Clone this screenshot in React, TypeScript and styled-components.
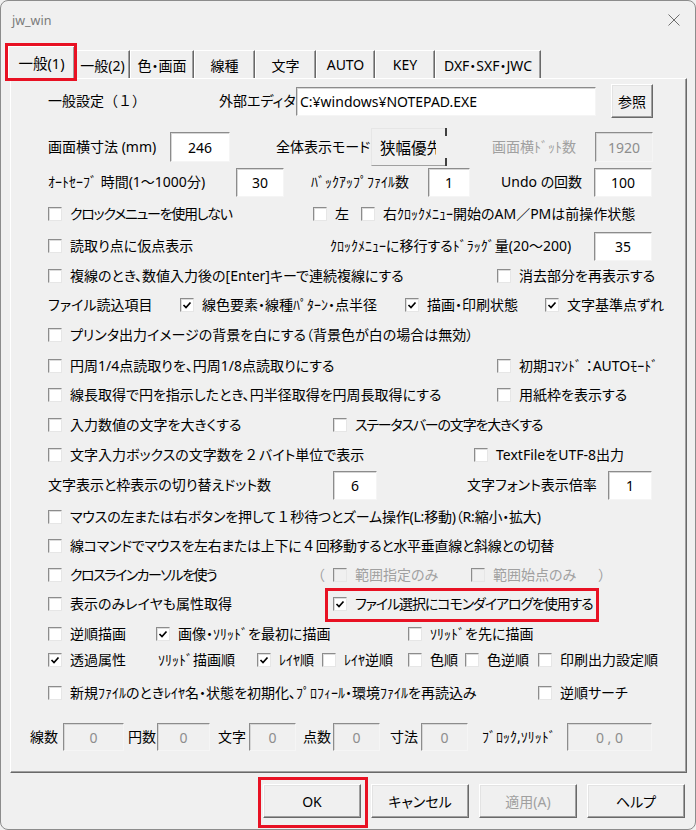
import React from 'react';
import styled, { createGlobalStyle, css } from 'styled-components';

const GlobalStyle = createGlobalStyle`
  html, body { margin: 0; padding: 0; background: #f0f0f0; }
  body {
    font-family: "Noto Sans", "Noto Sans CJK JP", sans-serif;
    font-size: 14px;
    color: #000;
  }
  * { box-sizing: border-box; }
`;

const ROW_H = 24;
const PANEL_X = 11;

const Window = styled.div`
  position: relative;
  width: 696px;
  height: 830px;
  border: 1px solid #8c8c8c;
  border-radius: 8px;
  background: #f0f0f0;
  overflow: hidden;
  display: flex;
  flex-direction: column;
`;

const TitleBar = styled.div`
  height: 40px;
  flex: none;
  display: flex;
  align-items: flex-start;
  padding-left: 11px;
`;

const Title = styled.span`
  font-family: "Noto Sans", sans-serif;
  font-size: 12.5px;
  color: #7a7a7a;
  margin-top: 11px;
  line-height: 18px;
`;

const CloseIcon = styled.svg`
  margin-left: auto;
  margin-right: 15px;
  margin-top: 13px;
`;

const TabStrip = styled.div`
  height: 37px;
  flex: none;
  display: flex;
  align-items: flex-end;
  padding-left: 7px;
  position: relative;
  z-index: 1;
`;

const Tab = styled.div<{ $w: number; $active?: boolean }>`
  width: ${(p) => p.$w}px;
  height: 28px;
  flex: none;
  display: flex;
  align-items: center;
  justify-content: center;
  white-space: nowrap;
  font-size: 14px;
  font-feature-settings: "palt";
  background: #f0f0f0;
  border-top: 1px solid #ffffff;
  border-left: 1px solid #ffffff;
  border-right: 1px solid #696969;
  box-shadow: inset -1px 0 0 #a0a0a0;
  ${(p) =>
    p.$active &&
    css`
      height: 33px;
      margin-bottom: -1px;
      padding-bottom: 2px;
      font-size: 14.5px;
    `}
`;

const Panel = styled.div`
  flex: none;
  margin-left: 9px;
  width: 677px;
  height: 695px;
  border-top: 1px solid #ffffff;
  border-left: 1px solid #ffffff;
  border-right: 1px solid #696969;
  border-bottom: 1px solid #696969;
  box-shadow: inset -1px -1px 0 #a0a0a0;
  display: flex;
  flex-direction: column;
`;

const Row = styled.div<{ $gap: number; $indent: number }>`
  height: ${ROW_H}px;
  flex: none;
  margin-top: ${(p) => p.$gap}px;
  padding-left: ${(p) => p.$indent}px;
  display: flex;
  align-items: center;
`;

const Cell = styled.div<{ $w?: number }>`
  flex: none;
  width: ${(p) => (p.$w ? `${p.$w}px` : 'auto')};
  display: flex;
  align-items: center;
  height: ${ROW_H}px;
  overflow: visible;
`;

const Label = styled.span<{ $gray?: boolean; $wide?: boolean; $ls?: number }>`
  white-space: pre;
  line-height: 20px;
  letter-spacing: ${(p) => p.$ls ?? 0}px;
  font-feature-settings: ${(p) => (p.$wide ? 'normal' : '"palt"')};
  color: ${(p) => (p.$gray ? '#a0a0a0' : '#000')};
`;

const CheckWrap = styled.div`
  display: flex;
  align-items: center;
  gap: 8px;
`;

const Box = styled.span<{ $dis?: boolean }>`
  width: 14px;
  height: 14px;
  flex: none;
  display: flex;
  align-items: center;
  justify-content: center;
  background: ${(p) => (p.$dis ? '#f0f0f0' : '#ffffff')};
  border: 1px solid;
  border-color: #8c8c8c #e6e6e6 #e6e6e6 #8c8c8c;
  box-shadow: inset 1px 1px 0 #dcdcdc;
`;

const Field = styled.div<{ $w: number; $h: number; $dis?: boolean; $left?: boolean }>`
  width: ${(p) => p.$w}px;
  height: ${(p) => p.$h}px;
  flex: none;
  display: flex;
  align-items: center;
  justify-content: ${(p) => (p.$left ? 'flex-start' : 'center')};
  padding-left: ${(p) => (p.$left ? 3 : 0)}px;
  background: ${(p) => (p.$dis ? '#f0f0f0' : '#ffffff')};
  color: ${(p) => (p.$dis ? '#8d8d8d' : '#000')};
  border: 1px solid;
  border-color: #8c8c8c #f5f5f5 #f5f5f5 #8c8c8c;
  box-shadow: inset 1px 1px 0 #d6d6d6;
  white-space: pre;
  font-size: 14px;
`;

const PushButton = styled.button<{ $w: number; $h: number; $dis?: boolean; $clip?: boolean }>`
  width: ${(p) => p.$w}px;
  height: ${(p) => p.$h}px;
  flex: none;
  padding: 0;
  margin: 0;
  font-family: inherit;
  font-size: 14px;
  font-feature-settings: "palt";
  color: ${(p) => (p.$dis ? '#a0a0a0' : '#000')};
  background: #f0f0f0;
  border: 1px solid;
  border-color: #ffffff #696969 #696969 #ffffff;
  box-shadow: inset -1px -1px 0 #a0a0a0, inset 1px 1px 0 #e3e3e3;
  display: flex;
  align-items: center;
  justify-content: ${(p) => (p.$clip ? 'flex-start' : 'center')};
  padding-left: ${(p) => (p.$clip ? 8 : 0)}px;
  position: relative;
  ${(p) =>
    p.$clip &&
    css`
      font-size: 15.5px;
      border-color: #e6e6e6 transparent #a0a0a0 #e6e6e6;
      box-shadow: none;
      &::before,
      &::after {
        content: '';
        position: absolute;
        right: -1px;
        width: 2px;
        height: 8px;
        background: #404040;
      }
      &::before { top: -1px; }
      &::after { bottom: -1px; }
    `}
`;

const ClipText = styled.span`
  display: block;
  width: 56px;
  overflow: hidden;
  white-space: nowrap;
  text-align: left;
`;

const ButtonBar = styled.div`
  flex: none;
  margin-top: 11px;
  display: flex;
  justify-content: flex-end;
  gap: 10px;
  padding-right: 10px;
`;

const Highlight = styled.div<{ $x: number; $y: number; $w: number; $h: number }>`
  position: absolute;
  left: ${(p) => p.$x}px;
  top: ${(p) => p.$y}px;
  width: ${(p) => p.$w}px;
  height: ${(p) => p.$h}px;
  border: 3px solid #e81123;
  pointer-events: none;
  z-index: 5;
`;

type Item =
  | { k: 'text'; x: number; s: string; gray?: boolean; wide?: boolean; ls?: number }
  | { k: 'check'; x: number; s: string; on?: boolean; dis?: boolean; ls?: number }
  | { k: 'field'; x: number; w: number; h: number; v: string; dis?: boolean; left?: boolean }
  | { k: 'btn'; x: number; w: number; h: number; s: string; clip?: boolean };

type RowDef = { y: number; items: Item[] };

const T = '\u2009';

const rows: RowDef[] = [
  {
    y: 101,
    items: [
      { k: 'text', x: 48, s: '一般設定（１）', wide: true },
      { k: 'text', x: 219, s: '外部エディタ' },
      { k: 'field', x: 296, w: 300, h: 29, v: 'C:¥windows¥NOTEPAD.EXE', left: true },
      { k: 'btn', x: 611, w: 42, h: 34, s: '参照' },
    ],
  },
  {
    y: 147,
    items: [
      { k: 'text', x: 48, s: '画面横寸法 (mm)' },
      { k: 'field', x: 170, w: 60, h: 30, v: '246' },
      { k: 'text', x: 276, s: '全体表示モード' },
      { k: 'btn', x: 371, w: 76, h: 38, s: '狭幅優先', clip: true },
      { k: 'text', x: 492, s: '画面横ﾄﾞｯﾄ数', gray: true },
      { k: 'field', x: 595, w: 58, h: 30, v: '1920', dis: true },
    ],
  },
  {
    y: 182,
    items: [
      { k: 'text', x: 48, s: 'ｵｰﾄｾｰﾌﾞ 時間(1～1000分)' },
      { k: 'field', x: 236, w: 48, h: 29, v: '30' },
      { k: 'text', x: 311, s: 'ﾊﾞｯｸｱｯﾌﾟﾌｧｲﾙ数' },
      { k: 'field', x: 428, w: 42, h: 29, v: '1' },
      { k: 'text', x: 501, s: 'Undo の回数' },
      { k: 'field', x: 594, w: 58, h: 29, v: '100' },
    ],
  },
  {
    y: 214,
    items: [
      { k: 'check', x: 48, s: 'クロックメニューを使用しない', ls: -1.3 },
      { k: 'check', x: 313, s: '左' },
      { k: 'check', x: 361, s: '右ｸﾛｯｸﾒﾆｭｰ開始のAM／PMは前操作状態' },
    ],
  },
  {
    y: 246,
    items: [
      { k: 'check', x: 48, s: '読取り点に仮点表示' },
      { k: 'text', x: 330, s: 'ｸﾛｯｸﾒﾆｭｰに移行するﾄﾞﾗｯｸﾞ量(20～200)' },
      { k: 'field', x: 594, w: 58, h: 29, v: '35' },
    ],
  },
  {
    y: 276,
    items: [
      { k: 'check', x: 48, s: '複線のとき、数値入力後の[Enter]キーで連続複線にする' },
      { k: 'check', x: 497, s: '消去部分を再表示する' },
    ],
  },
  {
    y: 305,
    items: [
      { k: 'text', x: 48, s: 'ファイル読込項目' },
      { k: 'check', x: 180, s: '線色要素・線種ﾊﾟﾀｰﾝ・点半径', on: true },
      { k: 'check', x: 405, s: '描画・印刷状態', on: true },
      { k: 'check', x: 545, s: '文字基準点ずれ', on: true },
    ],
  },
  {
    y: 335,
    items: [{ k: 'check', x: 48, s: 'プリンタ出力イメージの背景を白にする（背景色が白の場合は無効）' }],
  },
  {
    y: 366,
    items: [
      { k: 'check', x: 48, s: '円周1/4点読取りを、円周1/8点読取りにする' },
      { k: 'check', x: 497, s: '初期ｺﾏﾝﾄﾞ ：AUTOﾓｰﾄﾞ' },
    ],
  },
  {
    y: 395,
    items: [
      { k: 'check', x: 48, s: '線長取得で円を指示したとき、円半径取得を円周長取得にする' },
      { k: 'check', x: 497, s: '用紙枠を表示する' },
    ],
  },
  {
    y: 425,
    items: [
      { k: 'check', x: 48, s: '入力数値の文字を大きくする' },
      { k: 'check', x: 333, s: 'ステータスバーの文字を大きくする', ls: -1.2 },
    ],
  },
  {
    y: 455,
    items: [
      { k: 'check', x: 48, s: `文字入力ボックスの文字数を${T}２${T}バイト単位で表示` },
      { k: 'check', x: 474, s: 'TextFileをUTF-8出力' },
    ],
  },
  {
    y: 485,
    items: [
      { k: 'text', x: 48, s: '文字表示と枠表示の切り替えドット数' },
      { k: 'field', x: 333, w: 44, h: 29, v: '6' },
      { k: 'text', x: 467, s: '文字フォント表示倍率' },
      { k: 'field', x: 608, w: 44, h: 29, v: '1' },
    ],
  },
  {
    y: 517,
    items: [{ k: 'check', x: 48, s: `マウスの左または右ボタンを押して${T}１${T}秒待つとズーム操作(L:移動)（R:縮小・拡大)`, ls: -0.2 }],
  },
  {
    y: 546,
    items: [{ k: 'check', x: 48, s: `線コマンドでマウスを左右または上下に${T}４${T}回移動すると水平垂直線と斜線との切替`, ls: -0.3 }],
  },
  {
    y: 575,
    items: [
      { k: 'check', x: 48, s: 'クロスラインカーソルを使う', ls: -1.5 },
      { k: 'text', x: 311, s: '（', gray: true, wide: true },
      { k: 'check', x: 333, s: '範囲指定のみ', dis: true },
      { k: 'check', x: 471, s: '範囲始点のみ', dis: true },
      { k: 'text', x: 598, s: '）', gray: true, wide: true },
    ],
  },
  {
    y: 604,
    items: [
      { k: 'check', x: 48, s: '表示のみレイヤも属性取得' },
      { k: 'check', x: 333, s: 'ファイル選択にコモンダイアログを使用する', on: true, ls: -1.1 },
    ],
  },
  {
    y: 634,
    items: [
      { k: 'check', x: 48, s: '逆順描画' },
      { k: 'check', x: 156, s: '画像・ｿﾘｯﾄﾞを最初に描画', on: true },
      { k: 'check', x: 408, s: 'ｿﾘｯﾄﾞを先に描画' },
    ],
  },
  {
    y: 660,
    items: [
      { k: 'check', x: 48, s: '透過属性', on: true },
      { k: 'text', x: 158, s: 'ｿﾘｯﾄﾞ描画順' },
      { k: 'check', x: 257, s: 'ﾚｲﾔ順', on: true },
      { k: 'check', x: 322, s: 'ﾚｲﾔ逆順' },
      { k: 'check', x: 408, s: '色順' },
      { k: 'check', x: 465, s: '色逆順' },
      { k: 'check', x: 538, s: '印刷出力設定順' },
    ],
  },
  {
    y: 693,
    items: [
      { k: 'check', x: 48, s: '新規ﾌｧｲﾙのときﾚｲﾔ名・状態を初期化、ﾌﾟﾛﾌｨｰﾙ・環境ﾌｧｲﾙを再読込み' },
      { k: 'check', x: 538, s: '逆順サーチ' },
    ],
  },
  {
    y: 737,
    items: [
      { k: 'text', x: 30, s: '線数' },
      { k: 'field', x: 63, w: 61, h: 28, v: '0', dis: true },
      { k: 'text', x: 128, s: '円数' },
      { k: 'field', x: 157, w: 53, h: 28, v: '0', dis: true },
      { k: 'text', x: 218, s: '文字' },
      { k: 'field', x: 249, w: 47, h: 28, v: '0', dis: true },
      { k: 'text', x: 303, s: '点数' },
      { k: 'field', x: 333, w: 47, h: 28, v: '0', dis: true },
      { k: 'text', x: 390, s: '寸法' },
      { k: 'field', x: 421, w: 47, h: 28, v: '0', dis: true },
      { k: 'text', x: 482, s: 'ﾌﾞﾛｯｸ,ｿﾘｯﾄﾞ' },
      { k: 'field', x: 567, w: 85, h: 28, v: '0 , 0', dis: true },
    ],
  },
];

const tabs: { label: string; w: number }[] = [
  { label: '一般(1)', w: 67 },
  { label: '一般(2)', w: 55 },
  { label: '色・画面', w: 64 },
  { label: '線種', w: 61 },
  { label: '文字', w: 61 },
  { label: 'AUTO', w: 59 },
  { label: 'KEY', w: 60 },
  { label: 'DXF・SXF・JWC', w: 106 },
];

function CheckMark() {
  return (
    <svg width="12" height="12" viewBox="0 0 12 12">
      <path d="M2.5 6 L5 8.5 L9.5 3.5" stroke="#000" strokeWidth="1.7" fill="none" />
    </svg>
  );
}

function renderItem(it: Item) {
  switch (it.k) {
    case 'text':
      return (
        <Label $gray={it.gray} $wide={it.wide} $ls={it.ls}>
          {it.s}
        </Label>
      );
    case 'check':
      return (
        <CheckWrap>
          <Box $dis={it.dis}>{it.on && <CheckMark />}</Box>
          <Label $gray={it.dis} $ls={it.ls}>
            {it.s}
          </Label>
        </CheckWrap>
      );
    case 'field':
      return (
        <Field $w={it.w} $h={it.h} $dis={it.dis} $left={it.left}>
          {it.v}
        </Field>
      );
    case 'btn':
      return (
        <PushButton $w={it.w} $h={it.h} $clip={it.clip}>
          {it.clip ? <ClipText>{it.s}</ClipText> : it.s}
        </PushButton>
      );
  }
}

function PanelRow({ row, prevY }: { row: RowDef; prevY: number }) {
  const first = row.items[0].x;
  return (
    <Row $gap={row.y - prevY - ROW_H} $indent={first - PANEL_X}>
      {row.items.map((it, i) => {
        const next = row.items[i + 1];
        return (
          <Cell key={i} $w={next ? next.x - it.x : undefined}>
            {renderItem(it)}
          </Cell>
        );
      })}
    </Row>
  );
}

export default function App() {
  return (
    <>
      <GlobalStyle />
      <Window>
        <TitleBar>
          <Title>jw_win</Title>
          <CloseIcon width="12" height="12" viewBox="0 0 12 12">
            <path d="M0.5 0.5 L11.5 11.5 M11.5 0.5 L0.5 11.5" stroke="#6e6e6e" strokeWidth="1" fill="none" />
          </CloseIcon>
        </TitleBar>
        <TabStrip>
          {tabs.map((t, i) => (
            <Tab key={t.label} $w={t.w} $active={i === 0}>
              {t.label}
            </Tab>
          ))}
        </TabStrip>
        <Panel>
          {rows.map((r, i) => (
            <PanelRow key={i} row={r} prevY={i === 0 ? 67 : rows[i - 1].y} />
          ))}
        </Panel>
        <ButtonBar>
          <PushButton $w={98} $h={34}>OK</PushButton>
          <PushButton $w={98} $h={34}>キャンセル</PushButton>
          <PushButton $w={98} $h={34} $dis>適用(A)</PushButton>
          <PushButton $w={98} $h={34}>ヘルプ</PushButton>
        </ButtonBar>
        <Highlight $x={4} $y={42} $w={72} $h={38} />
        <Highlight $x={324} $y={587} $w={274} $h={34} />
        <Highlight $x={257} $y={776} $w={110} $h={51} />
      </Window>
    </>
  );
}
